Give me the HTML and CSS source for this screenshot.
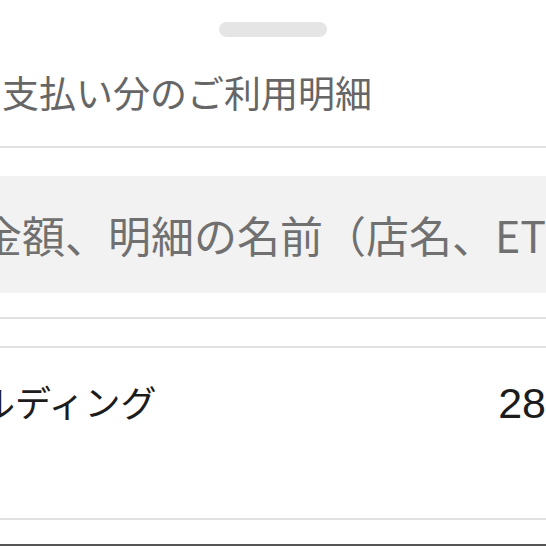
FILE: index.html
```html
<!DOCTYPE html>
<html lang="ja">
<head>
<meta charset="utf-8">
<link rel="stylesheet" href="styles.css">
</head>
<body>
<div class="sheet">
  <div class="handle"></div>
  <h1 class="title">支払い分のご利用明細</h1>
  <div class="divider"></div>
  <div class="search">
    <span class="placeholder">金額、明細の名前（店名、ETC）で検索</span>
  </div>
  <div class="divider gap-a"></div>
  <div class="divider gap-b"></div>
  <div class="row">
    <span class="name">ルディング</span>
    <span class="amount">28</span>
  </div>
  <div class="divider"></div>
  <div class="edge"></div>
</div>
</body>
</html>
```

FILE: styles.css
```css
html, body {
  margin: 0;
  padding: 0;
  background: #ffffff;
}
body {
  width: 546px;
  height: 546px;
  overflow: hidden;
  font-family: "Noto Sans CJK JP", "Noto Sans", sans-serif;
}
.sheet {
  display: flex;
  flex-direction: column;
  width: 546px;
}
.handle {
  width: 108px;
  height: 15px;
  border-radius: 8px;
  background: #e5e5e5;
  margin: 22px auto 0;
}
.title {
  margin: 37px 0 35px;
  padding-left: 2px;
  font-size: 37px;
  line-height: 37px;
  font-weight: 400;
  color: #666666;
  white-space: nowrap;
}
.divider {
  height: 2px;
  background: #e1e1e1;
  flex: none;
}
.search {
  margin-top: 28px;
  height: 117px;
  background: #f2f2f2;
  display: flex;
  align-items: center;
  overflow: hidden;
  white-space: nowrap;
}
.placeholder {
  margin-left: -21px;
  font-size: 43px;
  line-height: 43px;
  color: #707070;
}
.gap-a {
  margin-top: 24px;
}
.gap-b {
  margin-top: 27px;
}
.row {
  display: flex;
  align-items: flex-start;
  height: 135px;
  padding-top: 35px;
  white-space: nowrap;
  overflow: hidden;
}
.name {
  flex: 1;
  margin-left: -21px;
  font-size: 36px;
  line-height: 36px;
  color: #1c1c1c;
}
.amount {
  flex: 0 0 46px;
  margin-top: 3px;
  font-family: "Liberation Sans", Arial, sans-serif;
  font-size: 43px;
  line-height: 35px;
  color: #1c1c1c;
}
.edge {
  margin-top: 24px;
  height: 2px;
  background: #555555;
}
```
